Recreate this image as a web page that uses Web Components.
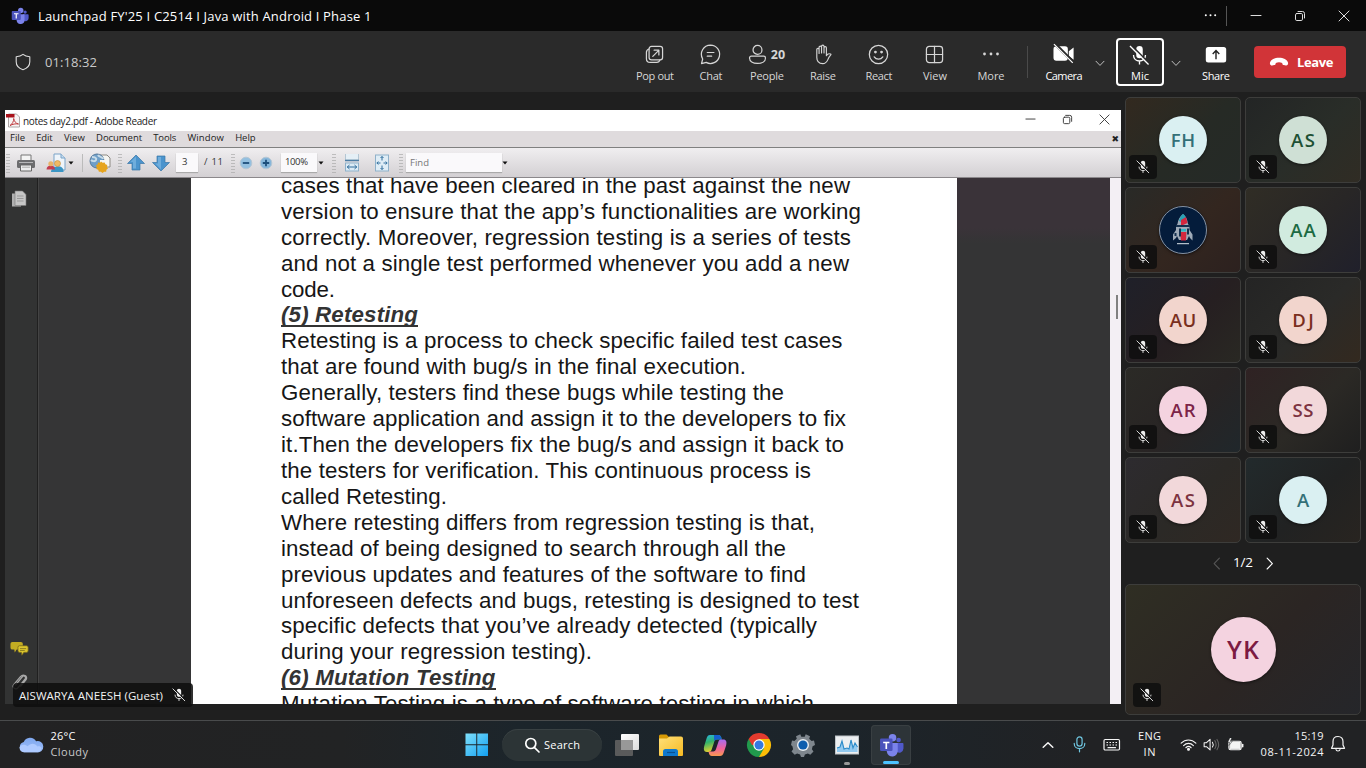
<!DOCTYPE html>
<html lang="en">
<head>
<meta charset="utf-8">
<title>Launchpad FY'25</title>
<style>
html,body{margin:0;height:100%;background:#1f1f1f;overflow:hidden}
body{font-family:"Open Sans","Noto Sans",sans-serif;color:#fff}
</style>
</head>
<body>
<meeting-app></meeting-app>
<script>
const ICONS = {
teams:[24,22,`<circle cx="18.8" cy="6.8" r="2.2" fill="#5059c9"/><circle cx="13" cy="4.6" r="3.6" fill="#7b83eb"/><path d="M16 9.5h6.5c.6 0 1 .4 1 1V15a4 4 0 0 1-7 2.500z" fill="#5059c9"/><path d="M7.500 9.500h10.500v7a5.300 5.300 0 0 1-10.500 1.500z" fill="#7b83eb"/><rect x="1" y="5.200" width="12" height="12" rx="1.200" fill="#4b53bc"/><path d="M4 8.300h6v1.500H7.800v5.500H6.200V9.800H4z" fill="#fff"/>`],
shield:[16,18,`<path d="M8 1.300C6 3 3.700 3.600 1.200 3.800v5C1.200 12.800 4 15.500 8 16.800c4-1.300 6.800-4 6.800-8v-5C12.300 3.600 10 3 8 1.300z"/>`,1.1],
popout:[20,20,`<rect x="4.300" y="1.500" width="14.200" height="14.200" rx="2.500"/><path d="M4.300 4.200C2.600 4.700 1.500 5.800 1.500 7.500v7c0 2.200 1.500 3.900 3.900 3.900h7c1.700 0 2.800-.9 3.300-2.700M8.200 12l6.300-6.300M9.600 5.500h5v5"/>`,1.3],
chat:[22,22,`<path d="M11 1.200a9.600 9.600 0 1 1-4.500 18.100L1.600 20.500l1.200-4.800A9.600 9.600 0 0 1 11 1.200zM7.600 8.900h7M7.600 12.800h4.600"/>`,1.3],
people:[20,22,`<circle cx="10" cy="6.200" r="4.700"/><path d="M3.500 12.800h13a1.900 1.900 0 0 1 1.900 1.900c0 3.500-3.500 5.700-8.400 5.700s-8.400-2.200-8.400-5.700a1.900 1.900 0 0 1 1.900-1.900z"/>`,1.3],
hand:[20,22,`<path d="M4 11V5.800c0-1.600 2.400-1.600 2.400 0V10M6.400 10V3.500c0-1.700 2.600-1.700 2.600 0v5.900M9 9.400V2.600c0-1.800 2.600-1.800 2.600 0v6.800M11.600 9.400V4c0-1.600 2.500-1.600 2.500 0v8.300c.8-1.500 2.200-2.600 4.400-1.700.5.200.5.500.2.900-1.500 1.600-2.400 3.300-3.200 5.200-1 2.400-2.500 4-5.300 4C6.300 20.700 4 18 4 14.300V11"/>`,1.2],
react:[22,22,`<circle cx="11" cy="11" r="9.600"/><path d="M6.500 13.400c2.200 3.300 6.800 3.300 9 0"/><circle cx="7.800" cy="8.500" r=".8" fill="currentColor"/><circle cx="14.200" cy="8.500" r=".8" fill="currentColor"/>`,1.3],
view:[20,20,`<rect x="1.500" y="1.500" width="17" height="17" rx="3"/><path d="M10 1.500v17M1.500 10h17"/>`,1.3],
more:[18,6,`<g fill="currentColor" stroke="none"><circle cx="2.500" cy="3" r="1.400"/><circle cx="9" cy="3" r="1.400"/><circle cx="15.500" cy="3" r="1.400"/></g>`],
camera:[24,22,`<path d="M3.500 3.500h9a3 3 0 0 1 3 3v9a3 3 0 0 1-3 3h-9a3 3 0 0 1-3-3v-9a3 3 0 0 1 3-3zM16.500 8.500 21.500 4.600v12.800L16.500 13.500z" fill="#fff"/><path d="M1.800.6 21.800 20.600" stroke="#2a2a2a" stroke-width="3.200"/><path d="M1 1.200 20.600 20.800" stroke="#fff" stroke-width="1.300"/>`],
mic:[22,22,`<rect x="7.600" y="1" width="6.800" height="13" rx="3.400" fill="currentColor"/><path d="M4.700 10.500c0 8.300 12.600 8.300 12.600 0M11 16.800v3.600" fill="none" stroke="currentColor" stroke-width="1.400"/><path d="M2.300.2 22 19.900" stroke="var(--gap,#2a2a2a)" stroke-width="1.700"/><path d="M1 1 20.500 20.500" stroke="currentColor" stroke-width="1.400"/>`],
share:[22,18,`<rect x=".8" y="1" width="20.400" height="15.500" rx="2.500" fill="#fff"/><path d="M11 13.300V4.800M7.700 7.900 11 4.600l3.300 3.300" stroke="#222" stroke-width="1.400" fill="none"/>`],
phone:[20,10,`<path d="M10 .8c4.300 0 8.200 1.700 9 4.700.4 1.900-.5 3.300-2.200 3l-2-.4c-1.100-.3-1.500-1-1.600-2.200C11.200 5.100 8.800 5.100 6.800 5.900c-.1 1.200-.5 1.900-1.600 2.200l-2 .4C1.500 8.800.6 7.400 1 5.500 1.800 2.500 5.700.8 10 .8z" fill="#fff"/>`],
down:[12,8,`<path d="m1.200 1.500 4.800 5 4.800-5"/>`,1.100],
up:[12,8,`<path d="m1.200 6.300L6 1.700l4.800 4.600"/>`,1.500],
left:[8,14,`<path d="M6.800 1.200 1.200 7l5.600 5.800"/>`,1.200],
right:[8,14,`<path d="M1.200 1.200 6.800 7l-5.600 5.800"/>`,1.200],
min:[12,12,`<path d="M1 5.500h10"/>`,1],
max:[12,12,`<rect x="1.500" y="3.500" width="7" height="7" rx="1.300"/><path d="M4 1.500h4.500a2 2 0 0 1 2 2V8"/>`,1],
close:[12,12,`<path d="m1 1 10 10M11 1 1 11"/>`,1],
pdf:[14,15,`<path d="M2.500 1h8l3 3v10h-11z" fill="#f7f5f5" stroke="#9a9292" stroke-width=".8"/><path d="M0 1h8.500v3.500H0z" fill="#a9121b"/><path d="M4 12.500c2-1 4-4.500 3.700-7 .8 3.300 2 4.800 4.800 5.500-3-.5-6 .2-8.500 1.500z" fill="none" stroke="#c03c40" stroke-width="1"/>`],
printer:[20,18,`<path d="M5 1h10v7H5z" fill="#f4f4f4" stroke="#777"/><rect x="1" y="6" width="18" height="8" rx="1.500" fill="#6d6d6f"/><path d="M3 8.500h14" stroke="#b7b7b9"/><path d="M4.500 11h11v6h-11z" fill="#eee" stroke="#666"/><path d="M6 13.200h8" stroke="#aaa"/>`],
cowork:[20,20,`<path d="M8 1h7l4 4v12H8z" fill="#eef4fa" stroke="#7aa3c8"/><path d="M15 1v4h4" fill="#c4dbee" stroke="#7aa3c8"/><path d="M5 19c0-7 12-8 12.500-1.500V19z" fill="#3b95c4"/><circle cx="11.500" cy="10.500" r="3" fill="#f0ba63" stroke="#c08a40" stroke-width=".6"/><path d="M.5 16.500c0-5.500 8.500-5.500 8.500 0z" fill="#c43c50"/><circle cx="4.800" cy="10.800" r="2.500" fill="#e9b36a"/>`],
globe:[22,20,`<path d="M11 2h7l3 3v9H11z" fill="#f5f5f1" stroke="#8e8a83"/><circle cx="8" cy="8" r="7" fill="#6f9fc8" stroke="#56799b"/><path d="M3 4c3 0 5 1 4 3s-4 1-5 0M9 2c1 2 5 2 5 4" stroke="#c8dce9" stroke-width="2" fill="none"/><path d="M11 7h7v6h-7z" fill="#f5f5f1"/><path d="m12 8.500 1.600 1.300 2-.4.8 1.900 1.900.8-.4 2 1.100 1.400-1.600 1.300-.2 2-2-.1L13.500 20l-1.600-1.300-2 .1-.7-2-1.900-.8.500-1.900-1-1.700 1.800-.9.400-2 2 .2z" fill="#e6a41d"/>`],
arrup:[18,18,`<path d="M9 1 17.500 9.500H13V16H5V9.500H.5z" fill="#4b94cd" stroke="#3a76a6" stroke-width=".7"/><path d="M9 2.500v12H6V8H3.500z" fill="#7fb8e2" opacity=".7"/>`],
arrdn:[18,18,`<path d="M9 17 .5 8.500H5V2h8v6.500h4.500z" fill="#4b94cd" stroke="#3a76a6" stroke-width=".7"/><path d="M9 15.500V3H6v6.500H3.500z" fill="#7fb8e2" opacity=".7"/>`],
zout:[14,14,`<circle cx="7" cy="7" r="5.800" fill="#94c0e0" stroke="#b4c6d5"/><path d="M3.800 7h6.400" stroke="#1d4f7c" stroke-width="1.800"/>`],
zin:[14,14,`<circle cx="7" cy="7" r="5.800" fill="#86b6da" stroke="#b4c6d5"/><path d="M3.800 7h6.400M7 3.800v6.400" stroke="#1d4f7c" stroke-width="1.800"/>`],
caret:[6,4,`<path d="M.5.500h5L3 3.500z" fill="#111"/>`],
fitw:[16,18,`<path d="M1.500 0v6h13V0" fill="#e5eff6" stroke="#b4c6d3"/><path d="M1 6.500h14" stroke="#4c7ea5" stroke-width="1.500"/><rect x="1.500" y="9" width="13" height="8" fill="#dcebf5" stroke="#8fb1ca"/><path d="M3 13h10M5.500 11 3.300 13l2.200 2M10.500 11l2.200 2-2.200 2" stroke="#2f6d9c" fill="none"/>`],
fitp:[16,18,`<rect x="1.500" y="1" width="13" height="16" fill="#dfedf6" stroke="#8fb1ca"/><path d="M8 2.500v4M8 11.500v4M3 9h3.500M9.500 9H13M6.500 4 8 2.500 9.500 4M6.500 14 8 15.500 9.500 14M4.300 7.500 2.800 9l1.500 1.500M11.700 7.500 13.200 9l-1.500 1.500" stroke="#2f6d9c" fill="none"/>`],
pages:[16,18,`<path d="M1 3.500h9v13H1z" fill="#b0b0b0"/><path d="M4 1h7.500L15 4.500v11H4z" fill="#c6c6c6" stroke="#777" stroke-width=".6"/><path d="M6 6h6.500M6 8.500h6.500M6 11h6.500" stroke="#999"/>`],
notes:[20,16,`<path d="M2.500 1h9a2 2 0 0 1 2 2v4a2 2 0 0 1-2 2H7l-2 3-.5-3h-2a2 2 0 0 1-2-2V3a2 2 0 0 1 2-2z" fill="#c3ac22"/><path d="M10 5h7.500a1.600 1.600 0 0 1 1.600 1.600v3.800a1.600 1.600 0 0 1-1.600 1.600h-3L12.500 15 12 12h-2a1.600 1.600 0 0 1-1.600-1.600V6.600A1.600 1.600 0 0 1 10 5z" fill="#dcc62e" stroke="#70621b" stroke-width=".8"/><path d="M10.500 8h6.500M10.500 10h5" stroke="#776a1c" stroke-width=".8"/>`],
clip:[18,20,`<path d="m4.500 13 7.500-9c1.800-2 4.500.2 3 2.300L7.500 15.500c-2.500 3-7 0-4.600-3.300L10 3.800c3-3.500 8.300-.5 6 3.200l-6 7.500" stroke="#a9a9a9" stroke-width="1.300" fill="none"/>`],
rocket:[48,48,`<circle cx="24" cy="24" r="23.500" fill="#041c3b" stroke="#87919f"/><path d="M24 8c3 2.500 4.500 5.500 5 10l1.500 2v4l3 4.500v6l-2.500-2.500-1-2-2 4h-8l-2-4-1 2-3 2.500v-6l3-4.500v-4l1.500-2c.5-4.500 2.500-7.500 5.500-10z" fill="#9fabb8"/><path d="M24 8c1.500 1 2.500 2 3 4l-5 4-2-1c.5-3 2-5.500 4-7z" fill="#29a3b6"/><path d="m22 14 5-3 1.500 6-6.500 3zM21 26h6.500l-.5 8.500h-5z" fill="#d3273e"/><path d="M17 19h14v2H17zM20 22.500h2v8h-2zM28 22.500h2v6h-2zM15.500 27h2v3h-2z" fill="#14304e"/><path d="M22 23h5v2.500h-5z" fill="#30b4c3"/><path d="M18 37.700h12" stroke="#dce4ea"/>`],
cloud:[26,18,`<defs><linearGradient id="c" x2="0" y2="1"><stop stop-color="#7fa8ef"/><stop offset="1" stop-color="#9cbdf8"/></linearGradient></defs><path d="M6.200 17A5.500 5.500 0 0 1 6 6.300 7 7 0 0 1 18.800 5.500 5.900 5.900 0 1 1 19.500 17z" fill="url(#c)"/><path d="M1.500 12c1-3.500 6-4 8.500-1.300 3-3.700 8-3.500 10 .3 2-.6 3.800.1 4.600 1.600-.6 2.800-2.400 4.200-5 4.200H6.200C3.500 16.800 1.800 15 1.500 12z" fill="#aecaff"/>`],
win:[24,24,`<defs><linearGradient id="w" x2="1" y2="1"><stop stop-color="#7fe0fb"/><stop offset="1" stop-color="#129ff0"/></linearGradient></defs><path d="M.5.500h11v11H.5zM12.500.500h11v11h-11zM.5 12.500h11v11H.5zM12.500 12.500h11v11h-11z" fill="url(#w)"/>`],
search:[16,16,`<circle cx="6.800" cy="6.500" r="5"/><path d="m10.300 10.300 4.700 4.700"/>`,1.700],
taskview:[24,24,`<defs><linearGradient id="t" x2="1" y2="1"><stop stop-color="#fff"/><stop offset="1" stop-color="#dcdcdc"/></linearGradient></defs><rect x="6" y="1" width="18" height="16" rx="1" fill="url(#t)"/><rect y="7" width="18" height="16" rx="1" fill="#5e5e5e" opacity=".95"/><path d="M6 7h12v10H6z" fill="#989898"/>`],
folder:[24,24,`<defs><linearGradient id="f" x2="1" y2="1"><stop stop-color="#ffe07a"/><stop offset="1" stop-color="#f6ba22"/></linearGradient></defs><path d="M0 3a1.500 1.500 0 0 1 1.500-1.500h6L10 4v6H0z" fill="#d79a05"/><path d="M0 5.500h8l2.500-2H22a2 2 0 0 1 2 2V22a1 1 0 0 1-1 1H1a1 1 0 0 1-1-1z" fill="url(#f)"/><path d="M4 23v-4.500A2.500 2.500 0 0 1 6.500 16h10a2.500 2.500 0 0 1 2.500 2.500V23z" fill="#0f78cc"/><path d="M8 19.500h8" stroke="#0a4f8f" stroke-width="1.200"/>`],
copilot:[24,24,`<defs><linearGradient id="p1" x2=".3" y2="1"><stop stop-color="#27b5e8"/><stop offset=".45" stop-color="#33b36a"/><stop offset="1" stop-color="#e7d02d"/></linearGradient><linearGradient id="p2" x2="0" y2="1"><stop stop-color="#a56bf0"/><stop offset=".55" stop-color="#f0639a"/><stop offset="1" stop-color="#f99a50"/></linearGradient></defs><path d="M7 2h8.500c2 0 2.700 1.500 3.300 4.500H14c-2 0-2.400 1-3.300 4L8.500 17c-.5 1.300-1.300 2-2.700 2H4C.6 19 .4 16 1.400 12.500l2.300-7.500C4.400 2.900 5.200 2 7 2z" fill="url(#p1)"/><path d="M11 2h4.500c2 0 2.700 1.500 3.300 4.500H14c-1.500 0-2.300.8-2.800 2z" fill="#155ecf"/><path d="M17 23H9c-2 0-3-1.500-3.500-4.500h4.700c1.600 0 2.400-1 3-3L15.500 8.500c.5-1.600 1.400-2 2.700-2h2c3.200 0 3.800 2.500 2.900 6l-2.500 7.500C19.900 22 18.900 23 17 23z" fill="url(#p2)"/>`],
chrome:[24,24,`<path d="M12 12 1.600 6A12 12 0 0 1 22.400 6z" fill="#e33b2e"/><path d="M12 12V6h10.400A12 12 0 0 1 12 24z" fill="#fbbd07"/><path d="M12 12 1.600 6A12 12 0 0 0 12 24l5.200-9z" fill="#219a4c"/><path d="M1.600 6 6.800 15 12 12V6z" fill="#219a4c"/><path d="M1.600 6H12v6H5z" fill="#e33b2e"/><circle cx="12" cy="12" r="5.700" fill="#fff"/><circle cx="12" cy="12" r="4.500" fill="#3479e0"/>`],
gear:[24,24,`<path d="m9.300 1.200 1 2.500h3.400l1-2.500 4.300 2-.8 2.600 2.400 2.300 2.400-.6 1 4.500-2.400 1.300-.7 3 1.600 2.200-3.200 3.300-2.400-1.400-3 1.200-.9 2.300h-3l-.9-2.300-3-1.200-2.400 1.400L.5 18.500l1.600-2.200-.7-3L0 12l1-4.500 2.400.6 2.400-2.300L5 3.200z" fill="#7e868d"/><circle cx="12" cy="12" r="6" fill="#e8edf1"/><circle cx="12" cy="12" r="4.600" fill="#0e5eae"/>`],
perf:[24,20,`<rect x=".5" y="1" width="23" height="18" fill="#eceff1" stroke="#bfc5c9"/><path d="M2 13l3-1 2-6 2 8 3-1 2 1 2-9 2 8 2-5 2.500 4v5H2z" fill="#93caf0"/><path d="m2 13 3-1 2-6 2 8 3-1 2 1 2-9 2 8 2-5 2.500 4" fill="none" stroke="#2b8bc9" stroke-width="1.100"/>`],
tmic:[14,18,`<rect x="4.200" y="1" width="5.600" height="10" rx="2.800"/><path d="M1.300 8c0 7.500 11.400 7.500 11.400 0M7 13.500V17"/>`,1.300],
kbd:[18,14,`<rect x="1" y="1.500" width="15.500" height="10.500" rx="1.200"/><path d="M3.500 4.500h10.500M3.500 7h10.500" stroke-dasharray="1.500 1.500" stroke-linecap="butt"/><path d="M5 9.700h7.500"/>`,1.200],
wifi:[18,14,`<path d="M1.200 5.500c4.500-4.500 11-4.500 15.600 0M3.800 8c3-3 7.400-3 10.400 0M6.200 10.300c1.700-1.600 4-1.600 5.600 0"/><circle cx="9" cy="12" r="1" fill="currentColor"/>`,1.200],
vol:[18,14,`<path d="M1.200 5v4.200h2.500L7.500 12.600V1.400L3.700 5z"/><path d="M10 4.500c1 1.600 1 3.500 0 5"/><path d="M12.500 2.800c1.800 2.800 1.800 5.700 0 8.500M14.800 1.500c2.300 3.600 2.300 7.500 0 11" stroke="#666"/>`,1.100],
battery:[18,14,`<rect x="2" y="3.500" width="13" height="9" rx="1.800"/><rect x="3.300" y="4.600" width="10.500" height="6.800" fill="currentColor"/><path d="M16.600 6.800v2.500" stroke-width="1.600"/><path d="M3 0 .8 4.600h2.400L2 8l3.600-4.400H3.400L5 0z" fill="#fff" stroke="#202224" stroke-width=".5"/>`,1.200],
bell:[16,18,`<path d="M8 1.500c-3.200 0-5 2.200-5 5V10l-1.500 3.300h13L13 10V6.500c0-2.800-1.800-5-5-5zM6 14.500c.3 2 3.700 2 4 0"/>`,1.200],
};
function define(name, css, html, init){
  customElements.define(name, class extends HTMLElement{
    connectedCallback(){
      if(this.shadowRoot) return;
      this.attachShadow({mode:"open"}).innerHTML =
        `<style>*{box-sizing:border-box}${css}</style>` + (typeof html==="function" ? html(this) : html);
      if(init) init(this);
    }
  });
}
const ic = (n,w,extra="") => `<ui-icon name="${n}" ${w?`w="${w}"`:""} ${extra}></ui-icon>`;
const fit = (t,w,extra="") => `<fit-line w="${w}" ${extra}>${t}</fit-line>`;

define("ui-icon",":host{display:block;flex:none;line-height:0}svg{display:block;overflow:visible}",el=>{
  const [w,h,body,sw]=ICONS[el.getAttribute("name")];
  const W=+(el.getAttribute("w")||w);
  return `<svg width="${W}" height="${W*h/w}" viewBox="0 0 ${w} ${h}" fill="none" ${sw?`stroke="currentColor" stroke-width="${sw}" stroke-linejoin="round" stroke-linecap="round"`:""}>${body}</svg>`;
});

define("title-bar",`:host{display:flex;align-items:center;height:31px;background:#0a0a0a;padding:0 10px 0 11px}
.t{font-size:13px;line-height:18px;margin-left:9px;flex:1}
.d{width:1px;height:20px;background:#555;margin:0 23px 0 9px}.c{color:#ddd;display:flex;gap:32px;padding-right:6px}`,
`${ic("teams",18)}<div class="t">${fit("Launchpad FY'25 I C2514 I Java with Android I Phase 1",333.500)}</div>${ic("more",13)}<div class="d"></div><div class="c">${ic("min")}${ic("max")}${ic("close")}</div>`);

define("call-button",`:host{display:flex;flex-direction:column;align-items:center;width:56px;height:48px;color:#d6d6d6;font-size:11px}
.i{height:32px;display:flex;align-items:center;gap:4px;font-size:12.500px;font-weight:700;margin-left:-1px}.l{line-height:15px;margin-top:-2px}
:host([strong]){color:#fff}:host([icon=camera]) .i{margin-left:0}:host([icon=share]) .i{margin-left:0;padding-top:2px}:host([focus]){width:48px;border:2px solid #fff;border-radius:4px}:host([focus]) .i{height:30px}`,
el=>`<div class="i">${ic(el.getAttribute("icon"),el.getAttribute("iw"))}<slot></slot></div><div class="l">${fit(el.getAttribute("label"),el.getAttribute("lw"))}</div>`);

define("call-toolbar",`:host{display:flex;align-items:center;height:61px;background:#2a2a2a;padding:1px 20px 0 15px}
.time{font-size:13px;color:#c9c9c9;margin-left:14px;flex:1}.d{width:1px;height:32px;background:#4a4a4a;margin:0 10px 0 8px}
.ch{width:24px;display:flex;justify-content:center;color:#ccc;padding-top:3px}.leave{width:92px;height:32px;border-radius:4px;background:#d13438;display:flex;align-items:center;gap:8px;padding-left:15px;font-weight:700;font-size:13px;margin-left:10px}`,
`${ic("shield",16,'style="color:#ddd"')}<div class="time">${fit("01:18:32",52)}</div>
<call-button icon="popout" iw="19" label="Pop out" lw="38"></call-button><call-button icon="chat" iw="21" label="Chat" lw="23"></call-button>
<call-button icon="people" iw="19" label="People" lw="34">20</call-button><call-button icon="hand" iw="19" label="Raise" lw="26"></call-button>
<call-button icon="react" iw="21" label="React" lw="27"></call-button><call-button icon="view" iw="19" label="View" lw="24"></call-button><call-button icon="more" label="More" lw="27"></call-button>
<div class="d"></div><call-button strong icon="camera" iw="23" label="Camera" lw="37" style="width:52px"></call-button><div class="ch" style="width:20px">${ic("down",10)}</div><div style="width:6px"></div>
<call-button strong focus icon="mic" iw="21" label="Mic" lw="18"></call-button><div class="ch">${ic("down",10)}</div>
<call-button strong icon="share" iw="22" label="Share" lw="28"></call-button>
<div class="leave">${ic("phone")}${fit("Leave",36.500)}</div>`);

const tb=[["grip",4,1],["printer",20,6],["cowork",20,10],["caret",6,2],["sep",1,8],["globe",22,6],["grip",4,7],["arrup",18,5],["arrdn",18,7],["box",22,6,"3",5],["txt",20,6,"/ 11",19],["grip",4,7],["zout",14,4],["zin",14,6],["box",36,8,"100%",23],["caret",6,1],["grip",4,8],["fitw",16,8],["fitp",16,14],["grip",4,9],["find",96,3,"Find",19],["caret",6,0]];
define("reader-toolbar",`:host{display:flex;align-items:center;height:31px;background:linear-gradient(#f0eef0,#d3d0d3);border-top:1px solid #808080;border-bottom:1px solid #8b888b;font-size:9.500px;color:#333}
div{flex:none}.grip{height:20px;opacity:.7;background:radial-gradient(circle,#aaa 35%,transparent 45%) 0 0/2px 3px}.sep{height:18px;background:#bbb}.box,.find{height:19px;background:#faf9fb;box-shadow:0 1px 1px #aaa;display:flex;align-items:center;justify-content:center;padding-bottom:2px}.box fit-line{margin-left:-5px}.txt{padding-bottom:2px}.find{justify-content:flex-start;padding-left:4px;color:#777;padding-bottom:0}`,
tb.map(([k,w,m,t,tw])=>`<div class="${k}" style="width:${w}px;margin-left:${m}px">${t?fit(t,tw):ICONS[k]?ic(k,w):""}</div>`).join(""));

define("reader-menu",`:host{display:flex;align-items:center;height:16px;background:#dfdbdd;color:#222;font-size:9.500px;line-height:13px;padding:0 3px 3px 5px;gap:11.200px}i{flex:1}b{font:bold 9px "DejaVu Sans";margin:2px -1px 0 0}`,
[["File",15],["Edit",16.500],["View",21],["Document",46],["Tools",23],["Window",36.500],["Help",20.500]].map(a=>fit(a[0],a[1])).join("")+`<i></i><b>✖</b>`);

const L=[["cases that have been cleared in the past against the new",569],["version to ensure that the app’s functionalities are working",580],["correctly. Moreover, regression testing is a series of tests",570],["and not a single test performed whenever you add a new",568],["code.",54],["(5) Retesting",137,1],["Retesting is a process to check specific failed test cases",561.500],["that are found with bug/s in the final execution.",465],["Generally, testers find these bugs while testing the",503],["software application and assign it to the developers to fix",565],["it.Then the developers fix the bug/s and assign it back to",563],["the testers for verification. This continuous process is",530],["called Retesting.",166],["Where retesting differs from regression testing is that,",534],["instead of being designed to search through all the",505],["previous updates and features of the software to find",525],["unforeseen defects and bugs, retesting is designed to test",578],["specific defects that you’ve already detected (typically",536],["during your regression testing).",311],["(6) Mutation Testing",214.500,1],["Mutation Testing is a type of software testing in which",533]];
define("pdf-page",`:host{display:block;width:766px;background:#fff;color:#161616;overflow:hidden;padding-left:90px;font:22.300px "Liberation Sans",Arial,sans-serif}
.l{height:25.930px;line-height:25.930px}.s{margin-top:-5.200px}.h{font-weight:bold;font-style:italic;color:#333}.h fit-line{height:25.930px;background:linear-gradient(#333,#333) 0 23px/100% 2px no-repeat}`,
`<div class="s">`+L.map(a=>`<div class="l${a[2]?" h":""}">${fit(a[0],a[1])}</div>`).join("")+`</div>`);

define("reader-window",`:host{display:flex;flex-direction:column;width:1116px;height:594px;background:#333;color:#222}
.t{display:flex;align-items:center;height:21px;background:#fff;font-size:10px;gap:3px;padding:0 11px 0 1px}.t i{flex:1}.t .c{display:flex;gap:26px;color:#333;padding-bottom:2px}
.b{display:flex;flex:1;min-height:0}.s{width:33px;background:#323333;border-right:1px solid #202020;display:flex;flex-direction:column;padding:12px 0 0 6px}.s i{flex:1}
.g{width:153px;background:#353536;box-shadow:inset 1px 0 #444}.r{flex:1;background:linear-gradient(#3a3339 0,#3a3339 50px,#343435 65px)}.sc{width:11px;background:#f3eff4;display:flex;justify-content:center;padding:117px 0 0 3px}.sc i{width:2px;height:24px;background:#808080}`,
`<div class="t">${ic("pdf",14)}${fit("notes day2.pdf - Adobe Reader",134)}<i></i><div class="c">${ic("min",11)}${ic("max",11)}${ic("close",11)}</div></div>
<reader-menu></reader-menu><reader-toolbar></reader-toolbar>
<div class="b"><div class="s">${ic("pages",16)}<i></i>${ic("notes",19,'style="margin-left:-1px"')}<div style="height:17px"></div>${ic("clip",17)}<div style="height:12px"></div></div><div class="g"></div><pdf-page></pdf-page><div class="r"></div><div class="sc"><i></i></div></div>`);

define("mute-badge",`:host{display:flex;align-items:center;justify-content:center;width:28px;height:24px;border-radius:4px;background:rgba(14,14,14,.85);color:#eee;--gap:#141414}`,ic("mic",14));

define("person-tile",`:host{display:flex;position:relative;align-items:center;justify-content:center;height:86px;border:1px solid #3d3d3b;border-radius:5px;background:linear-gradient(135deg,var(--a),var(--b) 55%,var(--c))}
.v{width:48px;height:48px;border-radius:50%;display:flex;align-items:center;justify-content:center;font-size:18.500px;font-weight:600;box-shadow:0 1px 3px #0008}.v fit-line{margin-top:-2px}
mute-badge{position:absolute;left:3px;bottom:3px}:host([big]){height:131px}:host([big]) .v{width:65px;height:65px;font-size:25px}:host([big]) mute-badge{left:7px;bottom:7px}`,
el=>{const g=n=>el.getAttribute(n);return `<div class="v" style="background:${g("bg")};color:${g("fg")}">${g("n")?fit(g("n"),g("w")):ic("rocket",48)}</div><mute-badge></mute-badge>`});

const P=[["FH",24.500,"#daf0f2","#347078","#32291f","#262a25","#252a27"],["AS",24,"#cfe0d5","#1e5034","#232525","#292d28","#302c24"],["",0,"#041c3b","#fff","#292a27","#33261f","#2c211f"],["AA",25.500,"#d1ebdf","#1b6a42","#302d25","#282626","#20202b"],["AU",26.500,"#f2d5cd","#7a2f1d","#1f2029","#261f21","#292823"],["DJ",21.500,"#f2d5cd","#7a2f1d","#242424","#2a2a28","#33291f"],["AR",25,"#f4d3e0","#7c2448","#2b2a26","#282424","#20272b"],["SS",21,"#f2d8da","#7c3240","#2f2223","#2b2925","#1f1f1f"],["AS",24,"#f2d8da","#7c3240","#2d2b2f","#2b2926","#2f2823"],["A",12,"#daf0f2","#347078","#222a2c","#212222","#282420"]];
define("people-panel",`:host{display:flex;flex-direction:column;width:236px}.g{display:grid;grid-template-columns:116px 116px;gap:4px}
.pg{display:flex;align-items:center;justify-content:center;gap:13px;height:41px;font-size:13.500px}.pg fit-line{margin-top:-3px}.pg ui-icon:first-child{color:#555}`,
`<div class="g">`+P.map(p=>`<person-tile n="${p[0]}" w="${p[1]}" bg="${p[2]}" fg="${p[3]}" style="--a:${p[4]};--b:${p[5]};--c:${p[6]}"></person-tile>`).join("")+`</div>
<div class="pg">${ic("left",7.500)}${fit("1/2",20)}${ic("right",7.500)}</div>
<person-tile big n="YK" w="32" bg="#f4d3e0" fg="#7c1a42" style="--a:#2f2e23;--b:#2b2523;--c:#25262a"></person-tile>`);

define("name-tag",`:host{display:flex;position:absolute;left:13px;top:591px;width:180px;height:24px;align-items:center;gap:9px;padding-left:6px;border-radius:4px;background:rgba(14,14,14,.86);font-size:11.500px;--gap:#141414;color:#f2f2f2}`,
`${fit("AISWARYA ANEESH (Guest)",144)}${ic("mic",14)}`);

define("task-bar",`:host{display:flex;align-items:center;height:48px;background:linear-gradient(90deg,#222223 0,#222324 25%,#1c252b 38%,#1c242a 62%,#212224 80%);border-top:1px solid #494b4c;font-size:11px;padding-left:18px}
.w{width:446.500px;display:flex;gap:7.500px;align-items:center}.w p,.two{margin:0;line-height:16px}.w p,.two{position:relative;top:-1px}.m{color:#c8c8c8}
.s{width:100px;height:32px;border-radius:16px;background:#2c3436;box-shadow:inset 0 1px #394143;margin:0 13px 0 14px;display:flex;align-items:center;gap:4px;padding-left:22px}
.s fit-line{margin-top:-1px}
.a{display:flex;gap:20px;flex:none}.p{position:relative}.p:after{content:"";position:absolute;left:9px;bottom:-8px;width:6px;height:3px;border-radius:2px;background:#999}
.a>*{height:24px;display:flex;align-items:center}.tm{position:relative;width:40px;height:40px;border-radius:4px;background:#2d3438;box-shadow:inset 0 0 0 1px #393f42;margin-left:12px;display:flex;align-items:center;justify-content:center;flex:none}.tm:after{content:"";position:absolute;left:12px;bottom:1px;width:16px;height:3px;border-radius:2px;background:#4cc2ff}
.r{display:flex;align-items:center;margin-left:130.500px;color:#f5f5f5}.two{display:flex;flex-direction:column;align-items:center}`,
`<div class="w">${ic("cloud",25)}<div><p>${fit("26°C",25)}</p><p class="m">${fit("Cloudy",37.500)}</p></div></div>
${ic("win",23.500)}<div class="s">${ic("search")}${fit("Search",36)}</div>
<div class="a">${ic("taskview",24)}${ic("folder",24)}${ic("copilot",24)}${ic("chrome",24)}${ic("gear",24)}<div class="p">${ic("perf",24)}</div></div><div class="tm">${ic("teams",25)}</div>
<div class="r">${ic("up",12)}${ic("tmic",13,'style="color:#6fc6e0;margin-left:19.500px"')}${ic("kbd",18,'style="margin-left:16.500px"')}
<div class="two" style="margin-left:17px;width:24px">${fit("ENG",23)}${fit("IN",12)}</div>${ic("wifi",17,'style="margin-left:18px"')}${ic("vol",17,'style="margin-left:6px"')}${ic("battery",17,'style="margin-left:7px"')}
<div class="two" style="margin-left:17px;align-items:flex-end;width:63px">${fit("15:19",29)}${fit("08-11-2024",63)}</div>${ic("bell",16,'style="margin-left:6px;position:relative;top:-1px"')}</div>`);

define("meeting-app",`:host{display:flex;flex-direction:column;width:1366px;height:768px;background:#1f1f1f}
.m{position:relative;display:flex;height:628px;padding:5px 0 0 5px;gap:4px}reader-window{margin-top:13px}`,
`<title-bar></title-bar><call-toolbar></call-toolbar><div class="m"><reader-window></reader-window><people-panel></people-panel><name-tag></name-tag></div><task-bar></task-bar>`);

/* A single line whose tracking is adjusted so that it spans exactly w pixels.
   Registered last, so the text is already laid out when it is measured. */
define("fit-line",":host{display:block;white-space:pre;flex:none}span{display:inline-block}",`<span><slot></slot></span>`,el=>{
  const w=+el.getAttribute("w"), s=el.shadowRoot.querySelector("span");
  const n=s.getBoundingClientRect().width, c=el.textContent.length;
  s.style.letterSpacing=((w-n)/Math.max(1,c-1))+"px";
  el.style.width=w+"px";
});
</script>
</body>
</html>
